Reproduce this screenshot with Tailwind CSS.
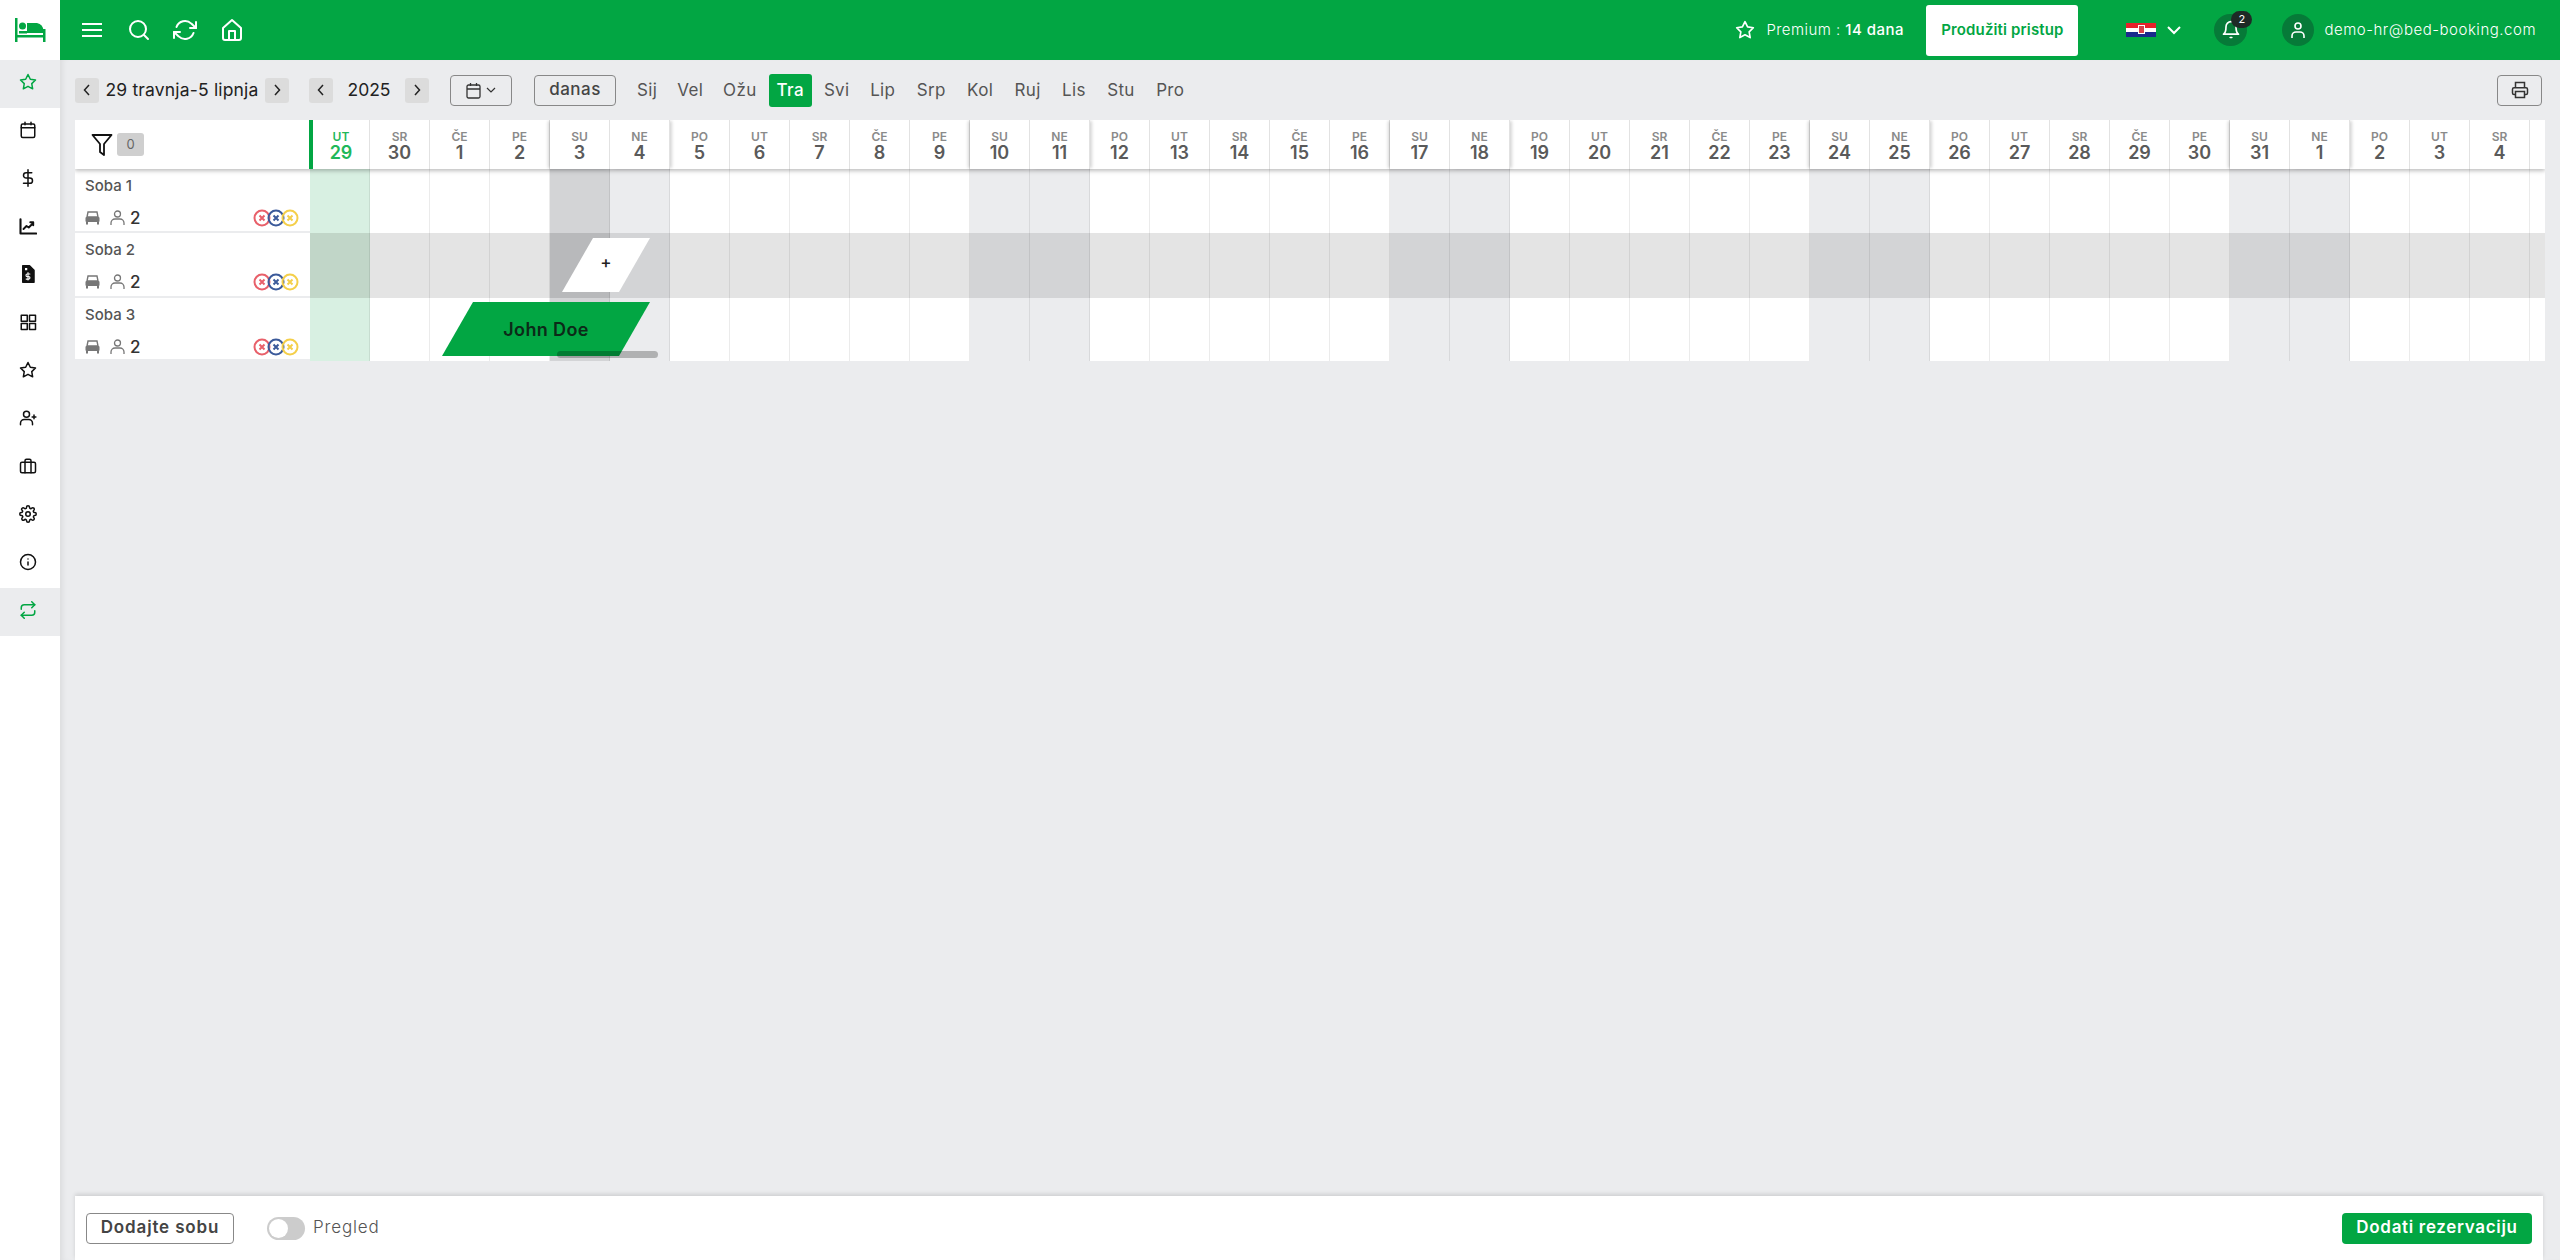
<!DOCTYPE html>
<html lang="hr">
<head>
  <meta charset="UTF-8" />
  <title>Bed-Booking kalendar</title>
  <script src="https://cdn.jsdelivr.net/npm/@tailwindcss/browser@4"></script>
</head>
<body class="h-screen overflow-hidden flex bg-[#ebecee] font-[Inter,sans-serif] text-[#222]">

  <!-- sidebar -->
  <aside class="w-[60px] shrink-0 h-full bg-white flex flex-col z-10">
    <div class="h-[60px] flex items-center pl-[14px] text-[#02a643]">
      <svg width="32" height="24" viewBox="0 0 32 24" fill="currentColor"><rect x="1" y="0" width="2.500" height="24"/><rect x="29" y="11" width="2.500" height="13"/><rect x="1" y="17" width="30" height="2.500"/><circle cx="8.500" cy="8" r="3.500"/><path d="M13 5h10q6 1 6.500 8v2H13z"/><rect x="5" y="13" width="8" height="2.500"/></svg>
    </div>
    <div id="side" class="flex flex-col"></div>
  </aside>

  <div class="flex-1 min-w-0 flex flex-col">
    <!-- top bar -->
    <header class="h-[60px] shrink-0 bg-[#02a643] text-white flex items-center pl-[22px] pr-[24px]">
      <svg class="w-[20px] h-[16px]" viewBox="0 0 20 16" fill="none" stroke="currentColor" stroke-width="2"><path d="M0 2h20M0 8h20M0 14h20"/></svg>
      <svg class="ml-[26px] w-[22px] h-[22px]" viewBox="0 0 22 22" fill="none" stroke="currentColor" stroke-width="2" stroke-linecap="round"><circle cx="10" cy="10" r="8"/><path d="M16 16l4 4"/></svg>
      <svg class="ml-[23px] w-[24px] h-[24px]" viewBox="0 0 24 24" fill="none" stroke="currentColor" stroke-width="2" stroke-linecap="round" stroke-linejoin="round"><path d="M23 4v6h-6M1 20v-6h6"/><path d="M3.500 9a9 9 0 0 1 14.800-3.400L23 10M1 14l4.700 4.400A9 9 0 0 0 20.500 15"/></svg>
      <svg class="ml-[25px] w-[20px] h-[24px]" viewBox="0 0 20 24" fill="none" stroke="currentColor" stroke-width="2" stroke-linejoin="round"><path d="M1 10l9-8 9 8v10a2 2 0 0 1-2 2H3a2 2 0 0 1-2-2z"/><path d="M7 22v-9h6v9"/></svg>

      <svg class="ml-auto w-[20px] h-[20px]" viewBox="0 0 24 24" fill="none" stroke="currentColor" stroke-width="2" stroke-linejoin="round"><path d="M12 2l3.100 6.300 6.900 1-5 4.900 1.200 6.900-6.200-3.300-6.200 3.300L7 14.200 2 9.300l6.900-1z"/></svg>
      <span class="ml-[11px] w-[140px] text-[15px] whitespace-nowrap font-light tracking-[0.03em]">Premium : <span class="font-medium">14 dana</span></span>
      <button class="ml-[20px] w-[152px] h-[51px] bg-white rounded-[3px] text-[#02a643] text-[15px] font-semibold tracking-[0.01em]">Produžiti pristup</button>
      <div class="ml-[48px] w-[30px] h-[14px] flex flex-col relative">
        <div class="flex-1 bg-[#e8202a]"></div><div class="flex-1 bg-white"></div><div class="flex-1 bg-[#1a2a8c]"></div>
        <div class="absolute left-[12px] top-[2px] w-[7px] h-[9px] bg-[#d8404a] border border-white"></div>
      </div>
      <svg class="ml-[11px] w-[14px] h-[9px]" viewBox="0 0 14 9" fill="none" stroke="currentColor" stroke-width="2"><path d="M1 1l6 6 6-6"/></svg>
      <div class="ml-[33px] w-[33px] h-[32px] rounded-full bg-[#067a38] flex items-center justify-center relative">
        <svg class="w-[20px] h-[22px]" viewBox="0 0 24 26" fill="none" stroke="currentColor" stroke-width="2" stroke-linejoin="round"><path d="M18 9a6 6 0 0 0-12 0c0 7-3 9-3 9h18s-3-2-3-9"/><path d="M11 22h2" stroke-linecap="round"/></svg>
        <span class="absolute left-[17px] top-[-3px] w-[21px] h-[17px] rounded-full bg-[#1e2a26] text-[11px] leading-[17px] text-center">2</span>
      </div>
      <div class="ml-[35px] w-[32px] h-[32px] rounded-full bg-[#067a38] flex items-center justify-center">
        <svg class="w-[16px] h-[18px]" viewBox="0 0 16 18" fill="none" stroke="currentColor" stroke-width="1.600"><circle cx="8" cy="5" r="3"/><path d="M2 17v-2a4 4 0 0 1 4-4h4a4 4 0 0 1 4 4v2"/></svg>
      </div>
      <span class="ml-[10px] text-[15px] font-light tracking-[0.035em] whitespace-nowrap">demo-hr@bed-booking.com</span>
    </header>

    <!-- work area -->
    <main class="flex-1 min-h-0 flex flex-col pl-[15px] pr-[15px] shadow-[inset_6px_0_6px_-4px_rgba(0,0,0,0.08)]">
      <div class="h-[60px] shrink-0 flex items-center text-[#222]">
        <button class="w-[24px] h-[25px] rounded-[3px] bg-[#dcdcdc] flex items-center justify-center"><svg width="8" height="12" viewBox="0 0 8 12" fill="none" stroke="currentColor" stroke-width="1.500"><path d="M6 1L1.500 6 6 11"/></svg></button>
        <span class="w-[166px] text-center text-[17.5px] tracking-[0.01em] whitespace-nowrap">29 travnja-5 lipnja</span>
        <button class="w-[24px] h-[25px] rounded-[3px] bg-[#dcdcdc] flex items-center justify-center"><svg width="8" height="12" viewBox="0 0 8 12" fill="none" stroke="currentColor" stroke-width="1.500"><path d="M2 1l4.500 5L2 11"/></svg></button>
        <button class="ml-[20px] w-[24px] h-[25px] rounded-[3px] bg-[#dcdcdc] flex items-center justify-center"><svg width="8" height="12" viewBox="0 0 8 12" fill="none" stroke="currentColor" stroke-width="1.500"><path d="M6 1L1.500 6 6 11"/></svg></button>
        <span class="w-[72px] text-center text-[17.5px]">2025</span>
        <button class="w-[24px] h-[25px] rounded-[3px] bg-[#dcdcdc] flex items-center justify-center"><svg width="8" height="12" viewBox="0 0 8 12" fill="none" stroke="currentColor" stroke-width="1.500"><path d="M2 1l4.500 5L2 11"/></svg></button>
        <button class="ml-[21px] w-[62px] h-[31px] rounded-[4px] border border-[#888] flex items-center justify-center gap-[5px]">
          <svg width="15" height="17" viewBox="0 0 15 17" fill="none" stroke="#333" stroke-width="1.300"><rect x="1" y="3" width="13" height="13" rx="1.500"/><path d="M1 7h13M4.500 1v3M10.500 1v3"/></svg>
          <svg width="10" height="6" viewBox="0 0 10 6" fill="none" stroke="#333" stroke-width="1.200"><path d="M1 1l4 4 4-4"/></svg>
        </button>
        <button class="ml-[22px] w-[82px] h-[31px] rounded-[4px] border border-[#888] text-[17px] font-medium text-[#444] tracking-[0.03em]">danas</button>
        <nav id="months" class="ml-[11px] flex items-center text-[17px] text-[#555] tracking-[0.02em]"></nav>
        <button class="ml-auto mr-[3px] w-[45px] h-[31px] rounded-[4px] border border-[#888] flex items-center justify-center">
          <svg width="18" height="18" viewBox="0 0 24 24" fill="none" stroke="#333" stroke-width="2"><path d="M6 9V2h12v7"/><path d="M6 18H4a2 2 0 0 1-2-2v-5a2 2 0 0 1 2-2h16a2 2 0 0 1 2 2v5a2 2 0 0 1-2 2h-2"/><path d="M6 14h12v8H6z"/></svg>
        </button>
      </div>

      <!-- calendar board -->
      <section id="board" class="relative overflow-hidden shrink-0 w-[2470px]">
        <div id="head" class="relative z-[2] h-[49px] flex bg-white shadow-[0_2px_4px_rgba(0,0,0,0.25)]">
          <div class="w-[235px] shrink-0 flex items-center pl-[16px]">
            <svg width="22" height="24" viewBox="0 0 22 24" fill="none" stroke="#111" stroke-width="1.800" stroke-linejoin="round"><path d="M1.500 2h19l-7.500 9v11l-4-3v-8z"/></svg>
            <span class="ml-[4px] w-[27px] h-[23px] rounded-[3px] bg-[#cfcfcf] text-[#666] text-[13px] flex items-center justify-center">0</span>
          </div>
        </div>
        <div id="rows"></div>

        <!-- reservation shapes -->
        <div class="absolute left-[487px] top-[118px] w-[88px] h-[54px] pb-[4px] bg-white [clip-path:polygon(31px_0,100%_0,57px_100%,0_100%)] flex items-center justify-center text-[17px] font-medium text-[#222]">+</div>
        <div class="absolute left-[367px] top-[182px] w-[208px] h-[54px] bg-[#02a643] [clip-path:polygon(31px_0,100%_0,177px_100%,0_100%)] flex items-center justify-center text-[18px] font-semibold text-[#0c2a18] tracking-[0.02em]">John Doe</div>
        <div class="absolute left-[482px] top-[231px] w-[101px] h-[7px] rounded-full bg-black/25"></div>
      </section>

      <div class="flex-1"></div>

      <footer class="h-[64px] shrink-0 w-[2468px] bg-white flex items-center pl-[11px] pr-[11px] shadow-[0_-2px_4px_rgba(0,0,0,0.12)]">
        <button class="w-[148px] h-[31px] rounded-[4px] border border-[#888] text-[17px] font-semibold text-[#444] tracking-[0.05em]">Dodajte sobu</button>
        <span class="ml-[33px] w-[38px] h-[23px] rounded-full bg-[#ccc] relative"><span class="absolute left-[2px] top-[2px] w-[19px] h-[19px] rounded-full bg-white"></span></span>
        <span class="ml-[8px] text-[17px] font-light text-[#555] tracking-[0.05em]">Pregled</span>
        <button class="ml-auto w-[190px] h-[31px] rounded-[4px] bg-[#02a643] text-white text-[17px] font-semibold tracking-[0.04em]">Dodati rezervaciju</button>
      </footer>
    </main>
  </div>

  <script>
    const icon = (body) => `<svg width="18" height="18" viewBox="0 0 24 24" fill="none" stroke="currentColor" stroke-width="2" stroke-linecap="round" stroke-linejoin="round">${body}</svg>`;
    const star = '<path d="M12 2l3.100 6.300 6.900 1-5 4.900 1.200 6.900-6.200-3.300-6.200 3.300L7 14.200 2 9.300l6.900-1z"/>';
    const sideIcons = [
      [star, true],
      ['<rect x="3" y="4" width="18" height="18" rx="2"/><path d="M3 9h18M8 1.500V5M16 1.500V5"/>'],
      ['<path d="M12 1v22M17 5H9.500a3.500 3.500 0 0 0 0 7h5a3.500 3.500 0 0 1 0 7H6"/>'],
      ['<path d="M2 3v19h21" stroke-width="2.800"/><path d="M6 16l4-4 3 2 6-6M15 7h4v4" stroke-width="2.500"/>'],
      ['<path d="M5 1h9l6 6v16H5z" fill="currentColor"/><path d="M12 10v10M14.500 12H11a1.500 1.500 0 0 0 0 3.500h2a1.500 1.500 0 0 1 0 3.300H9.500" stroke="#fff" stroke-width="1.400"/><path d="M8 4h3v3H8z" fill="#fff" stroke="none"/>'],
      ['<rect x="3" y="3" width="8" height="8"/><rect x="14" y="3" width="8" height="8"/><rect x="3" y="14" width="8" height="8"/><rect x="14" y="14" width="8" height="8"/>'],
      [star],
      ['<circle cx="10" cy="7" r="4"/><path d="M2 21v-2a5 5 0 0 1 5-5h6a5 5 0 0 1 5 5v2M20 8v5M17.500 10.500h5"/>'],
      ['<rect x="2" y="7" width="20" height="14" rx="2"/><path d="M8 21V5a2 2 0 0 1 2-2h4a2 2 0 0 1 2 2v16"/>'],
      ['<circle cx="12" cy="12" r="3"/><path d="M19.400 15a1.650 1.650 0 0 0 .33 1.820l.06.06a2 2 0 1 1-2.830 2.830l-.06-.06a1.650 1.650 0 0 0-2.820 1.170V21a2 2 0 1 1-4 0v-.09a1.650 1.650 0 0 0-2.900-1.140l-.06.06a2 2 0 1 1-2.830-2.830l.06-.06A1.650 1.650 0 0 0 3.180 14H3a2 2 0 1 1 0-4h.09a1.650 1.650 0 0 0 1.140-2.900l-.06-.06a2 2 0 1 1 2.830-2.830l.06.06A1.650 1.650 0 0 0 10 3.180V3a2 2 0 1 1 4 0v.09a1.650 1.650 0 0 0 2.900 1.140l.06-.06a2 2 0 1 1 2.830 2.830l-.06.06A1.650 1.650 0 0 0 20.820 10H21a2 2 0 1 1 0 4h-.09a1.650 1.650 0 0 0-1.510 1z"/>'],
      ['<circle cx="12" cy="12" r="10"/><path d="M12 16v-4M12 8h.01"/>'],
      ['<path d="M17 1l4 4-4 4"/><path d="M3 11V9a4 4 0 0 1 4-4h14M7 23l-4-4 4-4"/><path d="M21 13v2a4 4 0 0 1-4 4H3"/>', true],
    ];
    document.getElementById('side').innerHTML = sideIcons.map(([body, active]) =>
      `<div class="h-[48px] flex items-center pl-[19px] pb-[4px] ${active ? 'bg-[#ebecee] text-[#02a643]' : 'text-[#111]'}">${icon(body)}</div>`
    ).join('');

    const months = ['Sij', 'Vel', 'Ožu', 'Tra', 'Svi', 'Lip', 'Srp', 'Kol', 'Ruj', 'Lis', 'Stu', 'Pro'];
    document.getElementById('months').innerHTML = months.map((m, i) =>
      `<span class="h-[33px] pt-[2px] px-[8px] flex items-center rounded-[3px] ${i < 5 ? 'mx-[2px]' : 'mx-[2.7px]'} ${m === 'Tra' ? 'bg-[#02a643] text-white font-medium' : ''}">${m}</span>`
    ).join('');

    // 29.4. is a Tuesday; 38 columns, the last one is cut by the board edge so it stays empty
    const names = ['UT', 'SR', 'ČE', 'PE', 'SU', 'NE', 'PO'];
    const days = [];
    for (let i = 0; i < 38; i++) {
      const d = new Date(2025, 3, 29 + i);
      days.push({ name: names[i % 7], num: d.getDate(), weekend: i % 7 === 4 || i % 7 === 5, sat: i % 7 === 4 });
    }

    document.getElementById('head').insertAdjacentHTML('beforeend', days.map((d, i) => `
      <div class="w-[60px] shrink-0 flex flex-col items-center pt-[10px] border-r border-[#e2e2e2] ${i === 0 ? 'border-l-[4px] border-l-[#02a643] w-[61px] ml-[-1px] text-[#1fb85a]' : 'text-[#5a5a5a]'} ${d.weekend ? (d.sat ? 'relative shadow-[-3px_0_3px_-1px_rgba(0,0,0,0.16)]' : 'relative shadow-[3px_0_3px_-1px_rgba(0,0,0,0.16)]') : ''}">
        ${i < 37 ? `<span class="text-[12px] leading-[13px] font-semibold ${i === 0 ? '' : 'text-[#8a8a8a]'}">${d.name}</span>
        <span class="text-[18px] leading-[20px] font-semibold">${d.num}</span>` : ''}
      </div>`).join(''));

    const cellColor = (d, i, hovered) => {
      if (i === 0) return hovered ? 'bg-[#c1d6c8]' : 'bg-[#d8f0e2]';
      if (i === 4) return hovered ? 'bg-[#b8b9bb]' : 'bg-[#d3d4d6]';
      if (d.weekend) return hovered ? 'bg-[#d3d4d6]' : 'bg-[#ebecee]';
      return hovered ? 'bg-[#e4e4e4]' : 'bg-white';
    };
    const dot = (color) => `<svg class="-ml-[4px]" width="18" height="18" viewBox="0 0 18 18" fill="none" stroke="${color}" stroke-width="2"><circle cx="9" cy="9" r="7.500"/><path d="M6.500 6.500l5 5M11.500 6.500l-5 5"/></svg>`;

    document.getElementById('rows').innerHTML = [1, 2, 3].map(n => {
      const hovered = n === 2;
      return `<div class="flex ${n === 1 ? 'h-[64px]' : n === 2 ? 'h-[65px]' : 'h-[63px]'}">
        <div class="w-[235px] shrink-0 bg-white border-b-[2px] border-[#ebecee] pl-[10px] pr-[10px] flex flex-col">
          <span class="mt-[8px] text-[15px] leading-[18px] font-medium text-[#555]">Soba ${n}</span>
          <div class="mt-[14px] flex items-center text-[#777]">
            <svg width="15" height="14" viewBox="0 0 15 14" fill="currentColor"><path d="M3 1h9l1 5H2z" fill="none" stroke="currentColor" stroke-width="1.400"/><rect x="0.500" y="6" width="14" height="5" rx="1"/><rect x="1" y="11" width="2" height="2.500"/><rect x="12" y="11" width="2" height="2.500"/></svg>
            <svg class="ml-[10px]" width="15" height="16" viewBox="0 0 15 16" fill="none" stroke="currentColor" stroke-width="1.300"><circle cx="7.500" cy="4" r="3"/><path d="M1 15v-2a4 4 0 0 1 4-4h5a4 4 0 0 1 4 4v2"/></svg>
            <span class="ml-[5px] text-[17px] leading-[18px] font-medium text-[#333]">2</span>
            <div class="ml-auto flex pr-[1px]">${dot('#e8606a')}${dot('#3b5a9a')}${dot('#f4cf4a')}</div>
          </div>
        </div>
        ${days.map((d, i) => `<div class="w-[60px] shrink-0 border-r border-black/[0.08] ${cellColor(d, i, hovered)}"></div>`).join('')}
      </div>`;
    }).join('');
  </script>
</body>
</html>
